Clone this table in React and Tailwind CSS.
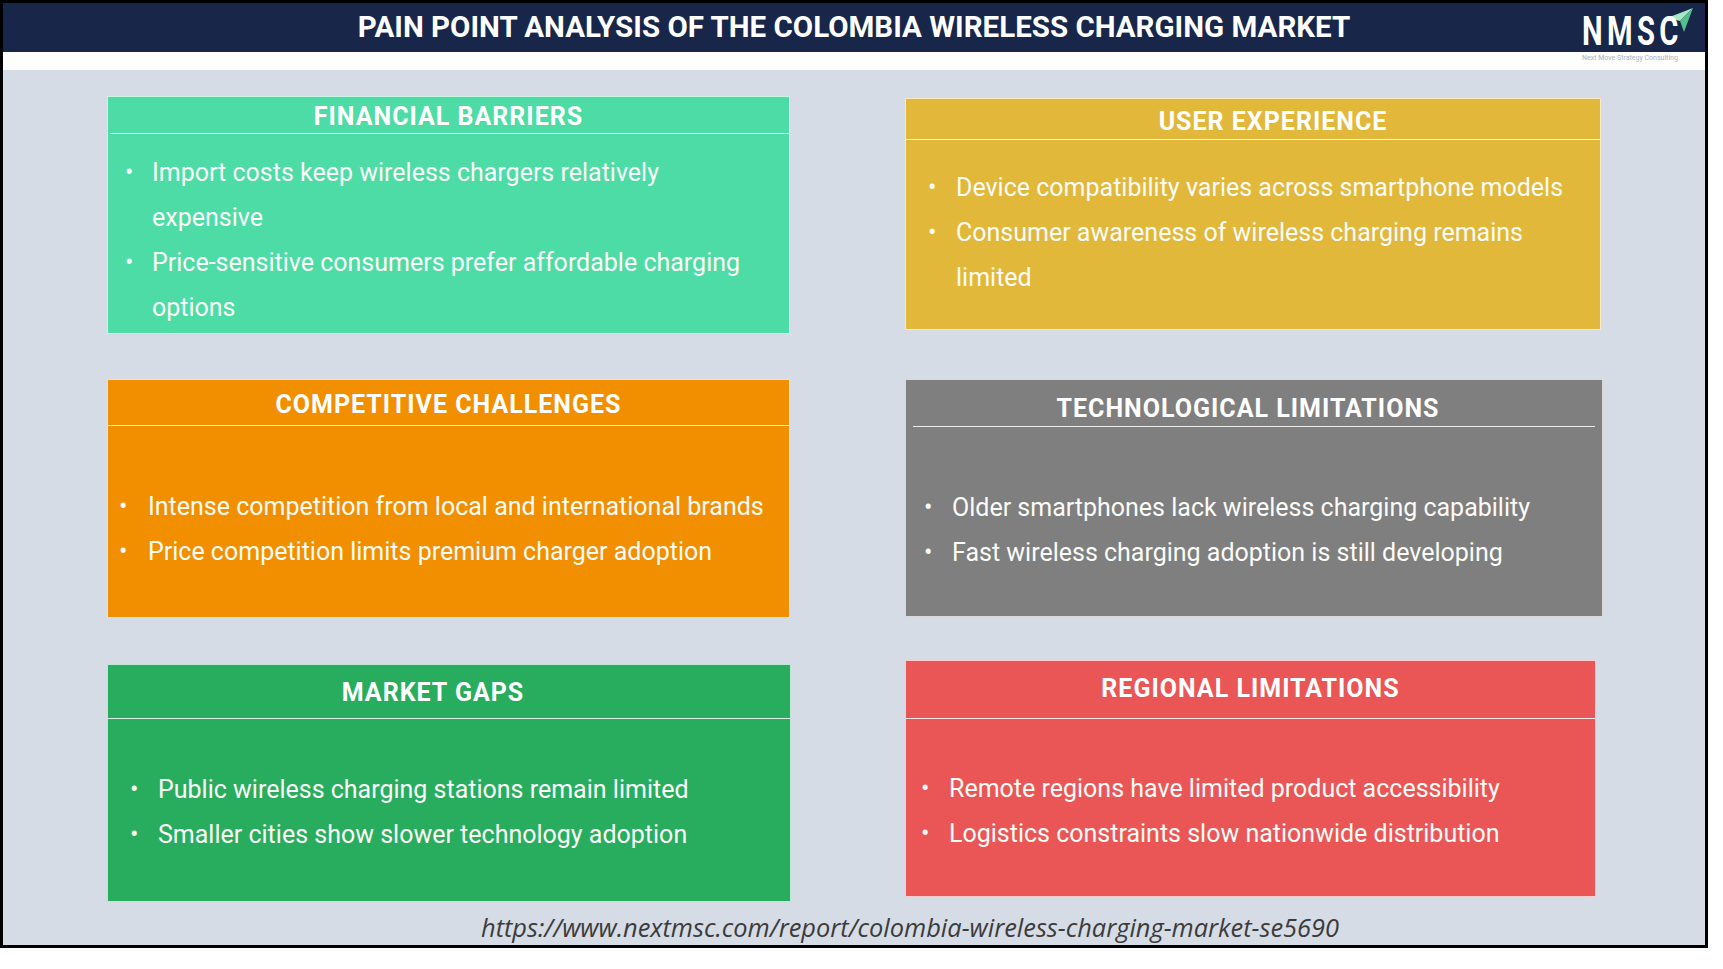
const CARDS = [
  [
    {
      title: 'FINANCIAL BARRIERS',
      bg: 'bg-[#4ddba6]',
      box: 'ml-[104px] mt-[26px] w-[683px] h-[238px]',
      head: 'h-[36px] pt-[3px]',
      line: 'ml-[2px]',
      body: 'pt-[16px] pl-[17px] pr-[40px]',
      dot: 'w-[27px]',
      items: [
        'Import costs keep wireless chargers relatively expensive',
        'Price-sensitive consumers prefer affordable charging options',
      ],
    },
    {
      title: 'USER EXPERIENCE',
      bg: 'bg-[#e2b83b]',
      box: 'ml-[115px] mt-[28px] w-[696px] h-[232px]',
      head: 'h-[40px] pl-[40px] pt-[4px]',
      line: '',
      body: 'pt-[25px] pl-[22px] pr-[24px]',
      dot: 'w-[28px]',
      items: [
        'Device compatibility varies across smartphone models',
        'Consumer awareness of wireless charging remains limited',
      ],
    },
  ],
  [
    {
      title: 'COMPETITIVE CHALLENGES',
      bg: 'bg-[#f28f01]',
      box: 'ml-[104px] mt-[45px] w-[683px] h-[239px]',
      head: 'h-[45px] pt-[4px]',
      line: '',
      body: 'pt-[58px] pl-[11px] pr-[10px]',
      dot: 'w-[29px]',
      items: [
        'Intense competition from local and international brands',
        'Price competition limits premium charger adoption',
      ],
    },
    {
      title: 'TECHNOLOGICAL LIMITATIONS',
      bg: 'bg-[#7f7f7f]',
      box: 'ml-[115px] mt-[45px] w-[698px] h-[238px]',
      head: 'h-[46px] pr-[12px] pt-[10px]',
      line: 'mx-[7px]',
      body: 'pt-[58px] pl-[18px] pr-[10px]',
      dot: 'w-[28px]',
      items: [
        'Older smartphones lack wireless charging capability',
        'Fast wireless charging adoption is still developing',
      ],
    },
  ],
  [
    {
      title: 'MARKET GAPS',
      bg: 'bg-[#28ad5f]',
      box: 'ml-[104px] mt-[46px] w-[684px] h-[238px]',
      head: 'h-[53px] pr-[32px] pt-[2px]',
      line: '',
      body: 'pt-[48px] pl-[22px] pr-[10px]',
      dot: 'w-[28px]',
      items: [
        'Public wireless charging stations remain limited',
        'Smaller cities show slower technology adoption',
      ],
    },
    {
      title: 'REGIONAL LIMITATIONS',
      bg: 'bg-[#ea5656]',
      box: 'ml-[114px] mt-[42px] w-[691px] h-[237px]',
      head: 'h-[57px] pb-[2px]',
      line: '',
      body: 'pt-[47px] pl-[15px] pr-[10px]',
      dot: 'w-[28px]',
      items: [
        'Remote regions have limited product accessibility',
        'Logistics constraints slow nationwide distribution',
      ],
    },
  ],
];

function Logo() {
  return (
    <div className="absolute right-[11px] top-[0px] w-[112px] h-[60px]">
      <svg className="absolute right-[0px] top-[4px]" width="28" height="26" viewBox="0 0 28 26">
        <polygon points="27,1 1,11 14,14" fill="#a4e8c6" />
        <polygon points="27,1 14,14 18,25" fill="#52c08a" />
      </svg>
      <div className="absolute left-[0px] top-[14px] text-[40px] leading-[30px] font-bold tracking-[6px] text-white origin-left scale-x-[0.73] whitespace-nowrap">
        NMSC
      </div>
      <div className="absolute left-[0px] top-[52px] text-[7px] leading-[7px] text-[#aab1bf] whitespace-nowrap">
        Next Move Strategy Consulting
      </div>
    </div>
  );
}

function Card({ card }) {
  return (
    <div className={`${card.box} ${card.bg} border border-white/70 flex flex-col shrink-0`}>
      <div className={`${card.head} flex items-center justify-center text-white font-bold text-[25px] tracking-[1px] leading-none`}>
        {card.title}
      </div>
      <div className={`${card.line} h-px bg-white/85`} />
      <ul className={`${card.body} text-[25px] leading-[45px] text-[#fbfbf7]`}>
        {card.items.map((t) => (
          <li key={t} className="flex">
            <span className={`${card.dot} shrink-0`}>•</span>
            <span>{t}</span>
          </li>
        ))}
      </ul>
    </div>
  );
}

export default function App() {
  return (
    <div className="w-[1723px] h-[969px] bg-white" style={{ fontFamily: 'Roboto, "Liberation Sans", sans-serif' }}>
      <div className="w-[1708px] h-[948px] border-black border-t-[3px] border-x-[3px] border-b-[3px] bg-[#d6dce5] flex flex-col">
        <div className="relative z-10 h-[49px] shrink-0 bg-[#172649] flex items-center justify-center">
          <h1 className="text-white font-bold text-[29.5px] leading-none">
            PAIN POINT ANALYSIS OF THE COLOMBIA WIRELESS CHARGING MARKET
          </h1>
          <Logo />
        </div>
        <div className="h-[18px] shrink-0 bg-[#fefefd]" />

        {CARDS.map((row, i) => (
          <div key={i} className="flex items-start">
            {row.map((c) => (
              <Card key={c.title} card={c} />
            ))}
          </div>
        ))}

        <div
          className="ml-[478px] mt-[9px] text-[25.4px] leading-[32px] italic text-[#3b3b3b] whitespace-nowrap"
          style={{ fontFamily: '"Open Sans", "Liberation Sans", sans-serif' }}
        >
          https://www.nextmsc.com/report/colombia-wireless-charging-market-se5690
        </div>
      </div>
    </div>
  );
}
